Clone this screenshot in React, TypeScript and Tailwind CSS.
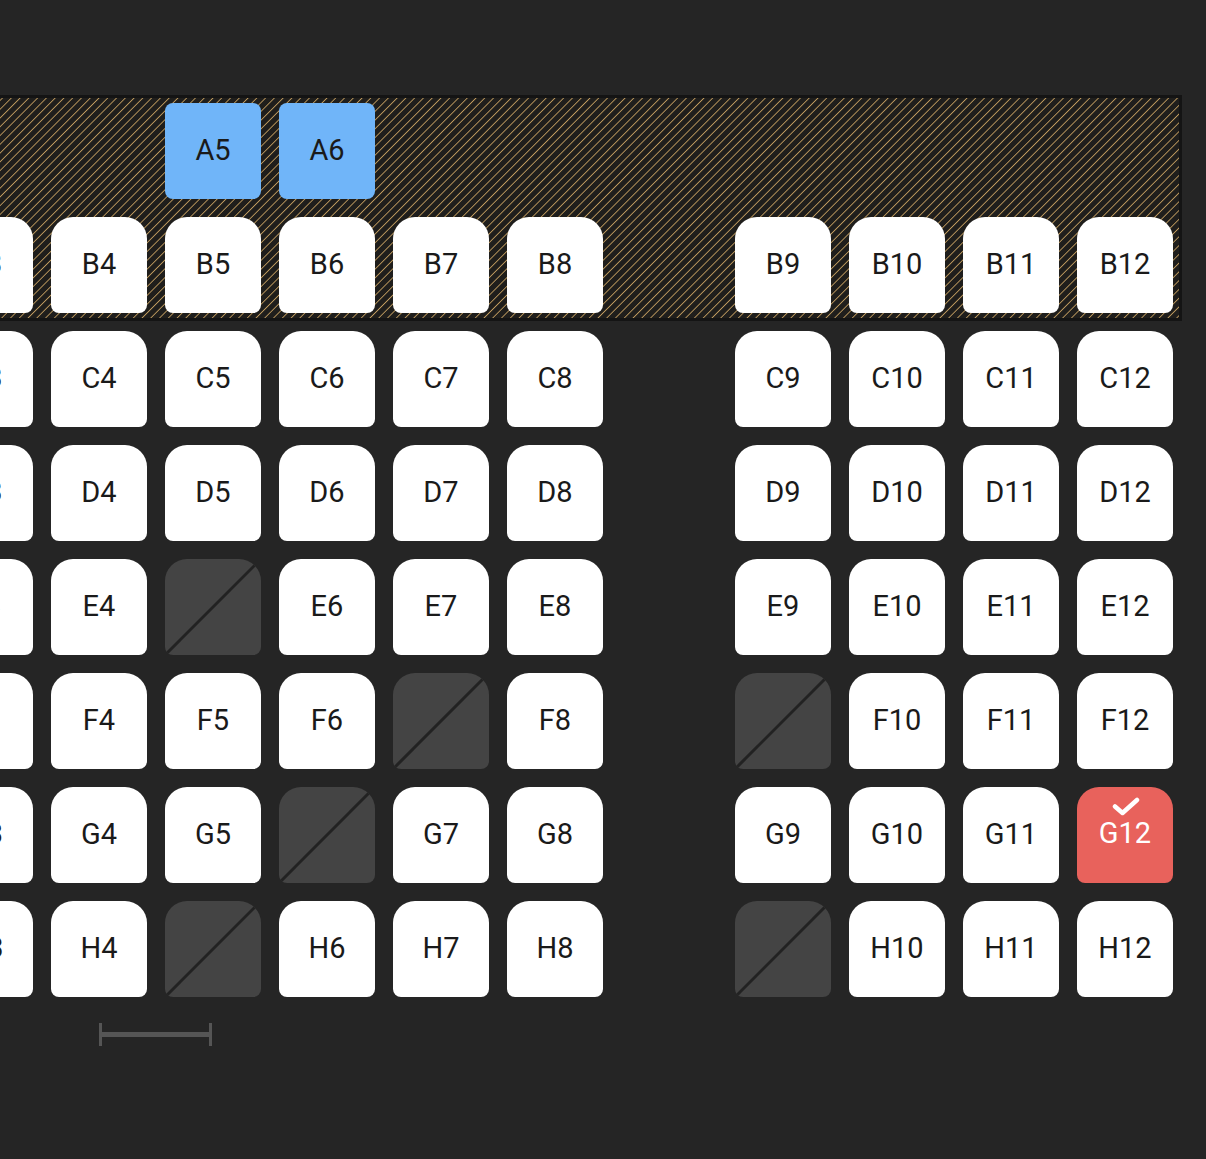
import React from 'react';

type Kind = 'free' | 'taken' | 'picked' | 'mine' | 'none';

const ROWS = ['A', 'B', 'C', 'D', 'E', 'F', 'G', 'H'];
const LEFT = [3, 4, 5, 6, 7, 8];
const RIGHT = [9, 10, 11, 12];

const taken = new Set(['E5', 'F7', 'F9', 'G6', 'H5', 'H9']);

function kindOf(id: string): Kind {
  if (id.startsWith('A')) return id === 'A5' || id === 'A6' ? 'picked' : 'none';
  if (id === 'G12') return 'mine';
  if (taken.has(id)) return 'taken';
  return 'free';
}

const Seat: React.FC<{ id: string }> = ({ id }) => {
  const kind = kindOf(id);
  const base = 'relative w-[96px] h-[96px] shrink-0 flex items-center justify-center text-[29px] font-["Roboto",sans-serif] overflow-hidden';

  if (kind === 'none') return <div className="w-[96px] h-[96px] shrink-0" />;

  if (kind === 'picked') {
    return <div className={`${base} rounded-[8px] bg-[#70b5f9] text-[#1a1a1a]`}>{id}</div>;
  }

  if (kind === 'taken') {
    return (
      <div className={`${base} rounded-t-[22px] rounded-b-[8px] bg-[#444444]`}>
        <svg className="absolute inset-0" width="96" height="96" viewBox="0 0 96 96">
          <line x1="-2" y1="98" x2="98" y2="-2" stroke="#222222" strokeWidth="3" />
        </svg>
      </div>
    );
  }

  if (kind === 'mine') {
    return (
      <div className={`${base} rounded-t-[22px] rounded-b-[8px] bg-[#e8625c] text-white`}>
        <svg className="absolute left-[35px] top-[10px]" width="28" height="19" viewBox="0 0 28 19">
          <path d="M3 9.5 L10.5 16 L25 3" fill="none" stroke="#ffffff" strokeWidth="4.5" strokeLinecap="round" strokeLinejoin="round" />
        </svg>
        <span className="mt-[-2px]">{id}</span>
      </div>
    );
  }

  return <div className={`${base} rounded-t-[22px] rounded-b-[8px] bg-white text-[#1a1a1a]`}>{id}</div>;
};

const SeatRow: React.FC<{ row: string }> = ({ row }) => (
  <div className="flex gap-[18px]">
    {LEFT.map((n) => (
      <Seat key={n} id={`${row}${n}`} />
    ))}
    <div className="w-[96px] shrink-0" />
    {RIGHT.map((n) => (
      <Seat key={n} id={`${row}${n}`} />
    ))}
  </div>
);

// diagonal hatching drawn behind the premium rows
const Hatch: React.FC = () => (
  <svg className="absolute inset-0 w-full h-full" aria-hidden="true">
    <defs>
      <pattern id="hatch" width="6.2" height="12" patternUnits="userSpaceOnUse" patternTransform="rotate(45)">
        <rect x="0" y="0" width="0.9" height="12" fill="#bf9a5e" />
      </pattern>
    </defs>
    <rect width="100%" height="100%" fill="#1f1e1c" />
    <rect width="100%" height="100%" fill="url(#hatch)" />
  </svg>
);

const App: React.FC = () => {
  return (
    <div className="w-[1206px] h-[1159px] bg-[#252525] overflow-hidden">
      <div className="pt-[95px]">
        {/* premium zone */}
        <div className="ml-[-80px] w-[1262px] border-[3px] border-[#141414]">
          <div className="relative px-[14px] py-[5px] flex flex-col gap-[18px]">
            <Hatch />
            <SeatRow row="A" />
            <SeatRow row="B" />
          </div>
        </div>

        <div className="ml-[-63px] mt-[10px] flex flex-col gap-[18px]">
          {ROWS.slice(2).map((r) => (
            <SeatRow key={r} row={r} />
          ))}
        </div>

        {/* scale */}
        <div className="ml-[99px] mt-[26px] flex items-center">
          <div className="w-[3px] h-[23px] bg-[#555555]" />
          <div className="w-[107px] h-[5px] bg-[#555555]" />
          <div className="w-[3px] h-[23px] bg-[#555555]" />
        </div>
      </div>
    </div>
  );
};

export default App;
